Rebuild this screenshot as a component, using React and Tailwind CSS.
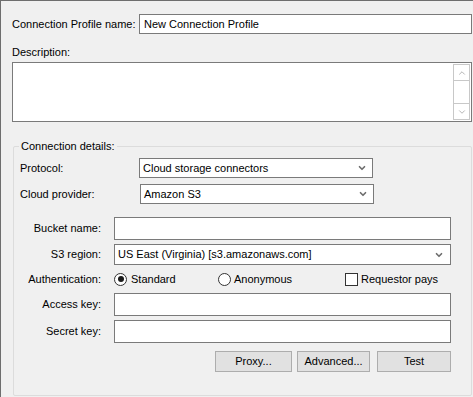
import { ChevronDown, ChevronUp } from "lucide-react"

const Field = ({ label, children }) => (
  <div className="flex items-center">
    <span className="w-[81px] shrink-0 text-right">{label}</span>
    <div className="ml-[13px] mr-[20px] flex-1">{children}</div>
  </div>
)

const Select = ({ value, className = "" }) => (
  <div className={`flex h-[20px] items-center justify-between border border-[#7a7a7a] bg-white pl-[3px] pr-[5px] ${className}`}>
    <span>{value}</span>
    <ChevronDown className="h-[10px] w-[10px] text-[#6d6d6d]" strokeWidth={4} />
  </div>
)

const Button = ({ children, className = "" }) => (
  <button className={`h-[21px] border border-[#adadad] bg-[#e1e1e1] text-center ${className}`}>{children}</button>
)

export default function App() {
  return (
    <div
      className="h-[397px] w-[473px] overflow-hidden border-l border-t border-[#6e6e6e] bg-[#f0f0f0] text-[11px] leading-none text-black"
      style={{ fontFamily: '"Liberation Sans", Arial, sans-serif' }}
    >
      {/* profile name */}
      <div className="mt-[13px] flex items-center">
        <span className="w-[138px] shrink-0 pl-[11px]">Connection Profile name:</span>
        <div className="mr-[1px] flex h-[20px] flex-1 items-center border border-[#7a7a7a] bg-white pl-[4px]">
          New Connection Profile
        </div>
      </div>

      {/* description */}
      <div className="mt-[13px] pl-[11px]">Description:</div>
      <div className="ml-[11px] mr-[1px] mt-[4px] flex h-[60px] justify-end border border-[#7a7a7a] bg-white p-[1px]">
        <div className="flex w-[17px] flex-col border border-[#c8c8c8]">
          <div className="flex h-[16px] items-center justify-center border-b border-[#c8c8c8]">
            <ChevronUp className="h-[10px] w-[10px] text-[#8a8a8a]" strokeWidth={1.5} />
          </div>
          <div className="flex-1" />
          <div className="flex h-[16px] items-center justify-center border-t border-[#c8c8c8]">
            <ChevronDown className="h-[10px] w-[10px] text-[#8a8a8a]" strokeWidth={1.5} />
          </div>
        </div>
      </div>

      {/* connection details group */}
      <div className="relative ml-[12px] mr-[1px] mt-[24px] h-[250px] rounded-[2px] border border-[#dcdcdc] pl-[6px] pt-[11px]">
        <span className="absolute -top-[6px] left-[5px] bg-[#f0f0f0] px-[2px]">Connection details:</span>

        <div className="flex items-center">
          <span className="w-[119px] shrink-0">Protocol:</span>
          <Select value="Cloud storage connectors" className="w-[234px]" />
        </div>
        <div className="mt-[6px] flex items-center">
          <span className="w-[120px] shrink-0">Cloud provider:</span>
          <Select value="Amazon S3" className="w-[234px]" />
        </div>

        <div className="mt-[13px] flex flex-col gap-[4px]">
          <Field label="Bucket name:">
            <div className="h-[23px] border border-[#7a7a7a] bg-white" />
          </Field>
          <Field label="S3 region:">
            <Select value="US East (Virginia) [s3.amazonaws.com]" className="h-[21px] !pr-[6px]" />
          </Field>
          <Field label="Authentication:">
            <div className="flex h-[20px] items-center whitespace-nowrap">
              <div className="flex w-[104px] items-center">
                <span className="flex h-[13px] w-[13px] items-center justify-center rounded-full border border-[#333] bg-white">
                  <span className="h-[6px] w-[6px] rounded-full bg-[#1a1a1a]" />
                </span>
                <span className="ml-[4px]">Standard</span>
              </div>
              <div className="flex w-[127px] items-center">
                <span className="h-[13px] w-[13px] rounded-full border border-[#333] bg-white" />
                <span className="ml-[3px]">Anonymous</span>
              </div>
              <div className="flex items-center">
                <span className="h-[13px] w-[13px] border border-[#333] bg-white" />
                <span className="ml-[3px]">Requestor pays</span>
              </div>
            </div>
          </Field>
          <Field label="Access key:">
            <div className="h-[23px] border border-[#7a7a7a] bg-white" />
          </Field>
          <Field label="Secret key:">
            <div className="h-[23px] border border-[#7a7a7a] bg-white" />
          </Field>
        </div>

        <div className="mr-[20px] mt-[8px] flex justify-end gap-[5px]">
          <Button className="w-[77px]">Proxy...</Button>
          <Button className="w-[73px]">Advanced...</Button>
          <Button className="ml-[2px] w-[74px]">Test</Button>
        </div>
      </div>
    </div>
  )
}
